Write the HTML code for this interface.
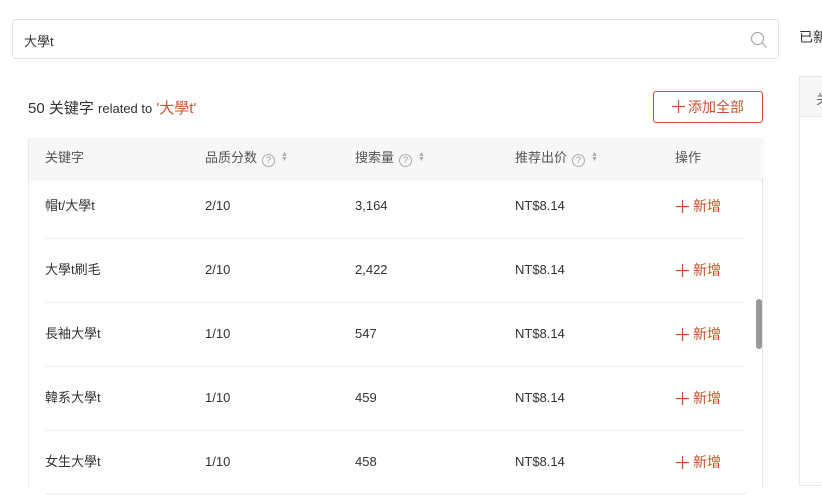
<!DOCTYPE html>
<html><head><meta charset="utf-8"><style>
*{margin:0;padding:0;box-sizing:border-box}
body{width:822px;height:482px;overflow:hidden;background:#fff;font-family:"Liberation Sans","Noto Sans CJK SC",sans-serif;color:#333;font-size:13px;position:relative}
.abs{position:absolute;white-space:nowrap}
.search{left:12px;top:19px;width:767px;height:40px;border:1px solid #e5e5e5;border-radius:3px}
.search span{position:absolute;left:11px;top:11px;font-size:13px;color:#333}
.title{left:28px;top:97px;font-size:15px;color:#333}
.title small{font-size:13px}
.title em{font-style:normal;color:#d0532f;font-size:15px}
.btn{left:653px;top:91px;width:110px;height:32px;border:1px solid #c9502c;border-radius:3px;color:#c9502c;font-size:14px;text-align:center;line-height:30px}
.table{left:28px;top:138px;width:735px;height:350px;border-left:1px solid #eee;border-right:1px solid #e6e6e6}
.head{position:absolute;left:0;top:0;width:734px;height:40px;background:#f7f7f7;box-shadow:0 2px 4px rgba(0,0,0,0.06);color:#555}
.head div,.row div{position:absolute;top:11px;font-size:13px;line-height:18px;white-space:nowrap}
.q{display:inline-block;width:13px;height:13px;border:1px solid #aaa;border-radius:50%;font-size:9px;line-height:11px;text-align:center;color:#999;margin-left:5px;vertical-align:-1px}
.s{display:inline-block;font-size:7px;color:#aaa;margin-left:6px;line-height:5px;vertical-align:1px}
.row{position:absolute;left:16px;width:700px;height:64px;border-bottom:1px solid #eee}
.row div{top:22px}
.add{color:#c9502c;font-size:14px!important}
.add svg{vertical-align:-2px;margin-right:4px}
.sb{left:756px;top:299px;width:6px;height:50px;background:#999;border-radius:3px}
.rp{left:799px;top:76px;width:30px;height:410px;border:1px solid #e8e8e8}
.rph{position:absolute;left:0;top:0;width:30px;height:40px;background:#f7f7f7;border-bottom:1px solid #eee}
</style></head><body>
<div class="abs search"><span>大學t</span>
<svg class="abs" style="left:736px;top:10px" width="20" height="20" viewBox="0 0 20 20"><circle cx="8.5" cy="8.5" r="6" fill="none" stroke="#aaa" stroke-width="1.2"/><line x1="13" y1="13" x2="17.5" y2="17.5" stroke="#aaa" stroke-width="1.2"/></svg></div>
<div class="abs" style="left:799px;top:27px;font-size:14px">已新</div>
<div class="abs title">50 关键字 <small>related to</small> <em>'大學t'</em></div>
<div class="abs btn"><svg width="13" height="13" viewBox="0 0 13 13" style="vertical-align:-1px;margin-right:3px"><path d="M6.5 0V13M0 6.5H13" stroke="#c9502c" stroke-width="1.2"/></svg>添加全部</div>
<div class="abs rp"><div class="rph"><span style="position:absolute;left:16px;top:12px;color:#666">关</span></div></div>
<div class="abs table">
<div class="head">
<div style="left:16px">关键字</div>
<div style="left:176px">品质分数<span class="q">?</span><span class="s">▲<br>▼</span></div>
<div style="left:326px">搜索量<span class="q">?</span><span class="s">▲<br>▼</span></div>
<div style="left:486px">推荐出价<span class="q">?</span><span class="s">▲<br>▼</span></div>
<div style="left:646px">操作</div>
</div>
<div class="row" style="top:37px"><div style="left:0">帽t/大學t</div><div style="left:160px">2/10</div><div style="left:310px">3,164</div><div style="left:470px">NT$8.14</div><div class="add" style="left:631px"><svg width="13" height="13" viewBox="0 0 13 13"><path d="M6.5 0V13M0 6.5H13" stroke="#c9502c" stroke-width="1.2"/></svg>新增</div></div>
<div class="row" style="top:101px"><div style="left:0">大學t刷毛</div><div style="left:160px">2/10</div><div style="left:310px">2,422</div><div style="left:470px">NT$8.14</div><div class="add" style="left:631px"><svg width="13" height="13" viewBox="0 0 13 13"><path d="M6.5 0V13M0 6.5H13" stroke="#c9502c" stroke-width="1.2"/></svg>新增</div></div>
<div class="row" style="top:165px"><div style="left:0">長袖大學t</div><div style="left:160px">1/10</div><div style="left:310px">547</div><div style="left:470px">NT$8.14</div><div class="add" style="left:631px"><svg width="13" height="13" viewBox="0 0 13 13"><path d="M6.5 0V13M0 6.5H13" stroke="#c9502c" stroke-width="1.2"/></svg>新增</div></div>
<div class="row" style="top:229px"><div style="left:0">韓系大學t</div><div style="left:160px">1/10</div><div style="left:310px">459</div><div style="left:470px">NT$8.14</div><div class="add" style="left:631px"><svg width="13" height="13" viewBox="0 0 13 13"><path d="M6.5 0V13M0 6.5H13" stroke="#c9502c" stroke-width="1.2"/></svg>新增</div></div>
<div class="row" style="top:293px"><div style="left:0">女生大學t</div><div style="left:160px">1/10</div><div style="left:310px">458</div><div style="left:470px">NT$8.14</div><div class="add" style="left:631px"><svg width="13" height="13" viewBox="0 0 13 13"><path d="M6.5 0V13M0 6.5H13" stroke="#c9502c" stroke-width="1.2"/></svg>新增</div></div>
</div>
<div class="abs sb"></div>
</body></html>
